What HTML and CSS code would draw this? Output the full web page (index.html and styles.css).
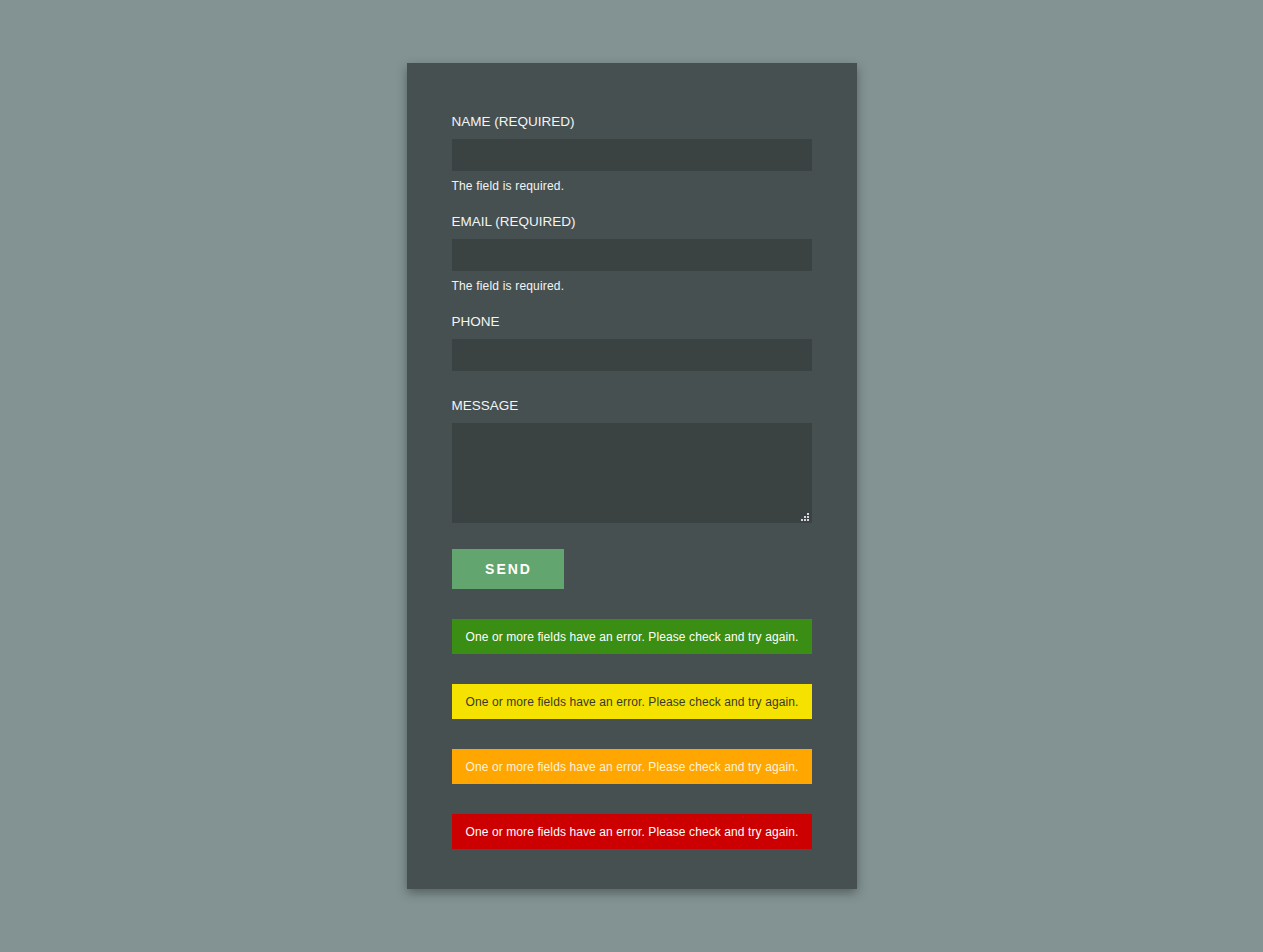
FILE: index.html
```html
<!DOCTYPE html>
<html lang="en">
<head>
<meta charset="utf-8">
<title>Contact form</title>
<link rel="stylesheet" href="styles.css">
</head>
<body>
<div class="card">
  <form class="form">
    <div class="field has-error">
      <label class="label">Name (required)</label>
      <input class="input" type="text">
      <span class="tip">The field is required.</span>
    </div>
    <div class="field has-error">
      <label class="label">Email (required)</label>
      <input class="input" type="email">
      <span class="tip">The field is required.</span>
    </div>
    <div class="field">
      <label class="label">Phone</label>
      <input class="input" type="text">
    </div>
    <div class="field">
      <label class="label">Message</label>
      <div class="textarea-wrap">
        <textarea class="textarea"></textarea>
        <svg class="grip" width="8" height="8" viewBox="0 0 8 8" aria-hidden="true">
          <rect x="6" y="0" width="2" height="2" fill="#d4d8d8"/>
          <rect x="3" y="3" width="2" height="2" fill="#d4d8d8"/>
          <rect x="6" y="3" width="2" height="2" fill="#d4d8d8"/>
          <rect x="0" y="6" width="2" height="2" fill="#d4d8d8"/>
          <rect x="3" y="6" width="2" height="2" fill="#d4d8d8"/>
          <rect x="6" y="6" width="2" height="2" fill="#d4d8d8"/>
        </svg>
      </div>
    </div>
    <button class="send" type="button">Send</button>
    <div class="alert alert-green">One or more fields have an error. Please check and try again.</div>
    <div class="alert alert-yellow">One or more fields have an error. Please check and try again.</div>
    <div class="alert alert-orange">One or more fields have an error. Please check and try again.</div>
    <div class="alert alert-red">One or more fields have an error. Please check and try again.</div>
  </form>
</div>
</body>
</html>
```
FILE: styles.css
```css
html, body {
  margin: 0;
  padding: 0;
}
body {
  background: #839393;
  font-family: "Liberation Sans", Arial, sans-serif;
  min-height: 952px;
  padding-top: 63px;
  box-sizing: border-box;
}
.card {
  width: 450px;
  margin: 0 auto;
  box-sizing: border-box;
  background: #475051;
  padding: 48px 45px 40px;
  box-shadow: 0 4px 10px rgba(0, 0, 0, 0.35);
}
.form {
  display: flex;
  flex-direction: column;
}
.field {
  display: flex;
  flex-direction: column;
  margin-bottom: 24px;
}
.field.has-error {
  margin-bottom: 17px;
}
.label {
  font-size: 13.5px;
  line-height: 20px;
  color: #f2f4f4;
  text-transform: uppercase;
  padding-top: 1px;
  margin-bottom: 7px;
}
.input, .textarea {
  display: block;
  width: 360px;
  box-sizing: border-box;
  border: none;
  outline: none;
  background: #3a4342;
  color: #fff;
  font-family: inherit;
  font-size: 14px;
  padding: 6px 10px;
  margin: 0;
}
.input {
  height: 32px;
}
.textarea-wrap {
  position: relative;
  width: 360px;
  height: 100px;
  margin-bottom: 2px;
}
.textarea {
  height: 100px;
  resize: none;
}
.grip {
  position: absolute;
  right: 3px;
  bottom: 2px;
  display: block;
}
.tip {
  font-size: 12px;
  line-height: 16px;
  letter-spacing: 0.18px;
  color: #f2f4f4;
  margin-top: 7px;
}
.send {
  align-self: flex-start;
  width: 112px;
  height: 40px;
  border: none;
  background: #63a56e;
  color: #fff;
  font-family: inherit;
  font-size: 14px;
  font-weight: bold;
  letter-spacing: 2px;
  text-transform: uppercase;
  padding: 0 0 0 2px;
  margin-bottom: 30px;
  cursor: pointer;
}
.alert {
  height: 35px;
  box-sizing: border-box;
  padding: 1px 14px 0;
  font-size: 12px;
  line-height: 34px;
  letter-spacing: 0.1px;
  margin-bottom: 30px;
  color: #fff;
  white-space: nowrap;
}
.alert:last-child {
  margin-bottom: 0;
}
.alert-green {
  background: #3a8e14;
}
.alert-yellow {
  background: #f6e200;
  color: #3a3a2a;
}
.alert-orange {
  background: #ffa600;
  color: #fdf3dd;
}
.alert-red {
  background: #cc0000;
}
```
